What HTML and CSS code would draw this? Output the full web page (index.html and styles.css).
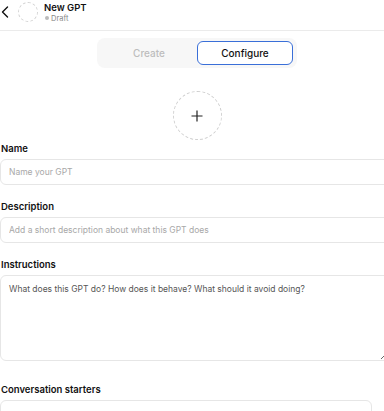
FILE: index.html
```html
<!DOCTYPE html>
<html lang="en">

<head>
    <meta charset="utf-8">
    <meta name="viewport" content="width=device-width, initial-scale=1.0">
    <title>New GPT</title>
    <link rel="stylesheet" href="styles.css">
</head>

<body>
    <header class="topbar">
        <button class="tilbage" aria-label="Back">
            <svg width="8" height="12" viewBox="0 0 8 12">
                <path d="M6.5 1 L1.5 6 L6.5 11" fill="none" stroke="#111" stroke-width="1.4" stroke-linecap="round" stroke-linejoin="round"/>
            </svg>
        </button>
        <div class="avatar"></div>
        <div class="titel">
            <h1>New GPT</h1>
            <p class="status"><span class="prik"></span>Draft</p>
        </div>
    </header>

    <div class="fane-wrap">
        <nav class="faner">
            <button>Create</button>
            <button class="valgt">Configure</button>
        </nav>
    </div>

    <div class="billede-wrap">
        <button class="tilfoej" aria-label="Add image">
            <svg width="12" height="12" viewBox="0 0 12 12">
                <path d="M6 0.5 V11.5 M0.5 6 H11.5" stroke="#222" stroke-width="1.2"/>
            </svg>
        </button>
    </div>

    <form class="formular">
        <div class="felt">
            <label for="navn">Name</label>
            <input id="navn" type="text" placeholder="Name your GPT">
        </div>

        <div class="felt">
            <label for="beskrivelse">Description</label>
            <input id="beskrivelse" type="text" placeholder="Add a short description about what this GPT does">
        </div>

        <div class="felt">
            <label for="instrukser">Instructions</label>
            <textarea id="instrukser" placeholder="What does this GPT do? How does it behave? What should it avoid doing?"></textarea>
        </div>

        <div class="felt starter">
            <label for="starter">Conversation starters</label>
            <div class="starter-raekke">
                <input id="starter" type="text">
                <button type="button" class="fjern">×</button>
            </div>
        </div>
    </form>
</body>

</html>
```

FILE: styles.css
```css
* {
    box-sizing: border-box;
}

body {
    margin: 0;
    font-family: Inter, "Noto Sans", sans-serif;
    color: #111;
    background-color: white;
    overflow: hidden;
}

button {
    font-family: inherit;
    background: none;
    border: none;
    padding: 0;
}

.topbar {
    display: flex;
    align-items: center;
    height: 31px;
    padding-left: 1px;
    border-bottom: 1px solid #ebebeb;
}

.tilbage {
    width: 8px;
    height: 12px;
    display: flex;
    margin-top: -6px;
}

.avatar {
    width: 20px;
    height: 20px;
    margin-left: 9px;
    margin-top: -6px;
    border: 1px dashed #d2d2d2;
    border-radius: 50%;
}

.titel {
    margin-left: 6px;
    margin-top: -6px;
}

.titel h1 {
    margin: 0;
    font-size: 9.5px;
    font-weight: 600;
    line-height: 11px;
}

.status {
    margin: 1px 0 0;
    font-size: 7.5px;
    line-height: 9px;
    color: #888;
    display: flex;
    align-items: center;
}

.prik {
    width: 4px;
    height: 4px;
    border-radius: 50%;
    background-color: #bbb;
    margin: 0 2px 0 1px;
}

.fane-wrap {
    display: flex;
    justify-content: center;
    margin-top: 7px;
    padding-left: 10px;
}

.faner {
    width: 200px;
    height: 30px;
    padding: 3px 4px;
    background-color: #f7f7f7;
    border-radius: 8px;
    display: grid;
    grid-template-columns: 1fr 96px;
}

.faner button {
    font-size: 10px;
    font-weight: 500;
    color: #bdbdbd;
    border-radius: 6px;
}

.faner .valgt {
    background-color: white;
    color: #111;
    border: 1px solid #3a6fd8;
}

.billede-wrap {
    display: flex;
    justify-content: center;
    margin-top: 23px;
    padding-left: 10px;
}

.tilfoej {
    width: 49px;
    height: 49px;
    border: 1px dashed #cfcfcf;
    border-radius: 50%;
    display: flex;
    align-items: center;
    justify-content: center;
}

.formular {
    width: 390px;
    margin-top: 2px;
}

.felt {
    margin-bottom: 15px;
}

.felt label {
    display: block;
    padding-left: 1px;
    font-size: 9.5px;
    font-weight: 600;
    line-height: 14px;
    margin-bottom: 3px;
}

.felt input,
.felt textarea {
    display: block;
    width: 100%;
    height: 26px;
    padding: 0 8px;
    font-family: inherit;
    font-size: 8.5px;
    color: #111;
    border: 1px solid #e6e6e6;
    border-radius: 6px;
    outline: none;
}

.felt textarea {
    height: 86px;
    padding: 7px 8px;
    line-height: 12px;
}

.felt input::placeholder {
    color: #a8a8a8;
}

.felt textarea::placeholder {
    color: #555;
}

.starter {
    margin-top: 22px;
}

.starter-raekke {
    display: flex;
}

.starter-raekke input {
    flex: 1;
    height: 28px;
}

.fjern {
    width: 18px;
    padding-left: 6px;
    text-align: left;
    font-size: 10px;
    line-height: 10px;
    color: #444;
    align-self: flex-end;
    margin-bottom: 3px;
}
```
